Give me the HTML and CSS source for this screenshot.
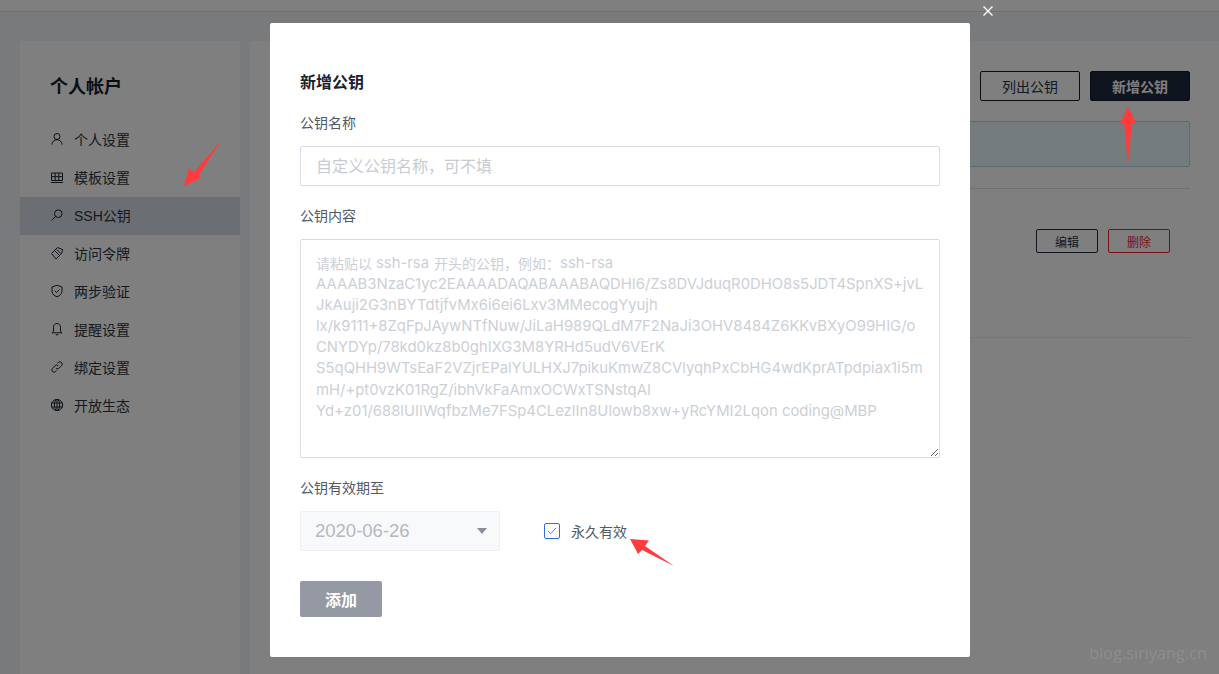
FILE: index.html

```html
<!DOCTYPE html>
<html lang="zh-CN">
<head>
  <meta charset="UTF-8" />
  <meta name="viewport" content="width=device-width, initial-scale=1.0" />
  <title>SSH公钥</title>
  <link rel="stylesheet" href="styles.css">
</head>
<body>
  <div class="topbar"></div>

  <div class="page">
    <aside class="sidebar">
      <h2 class="sidebar-title">个人帐户</h2>
      <nav class="menu">
        <a class="menu-item">
          <svg class="menu-icon" viewBox="0 0 14 14"><circle cx="7" cy="4.5" r="3"/><path d="M1.8 12.6c.4-3 2.500-4.900 5.200-4.900s4.800 1.900 5.200 4.900"/></svg>
          个人设置
        </a>
        <a class="menu-item">
          <svg class="menu-icon" viewBox="0 0 14 14"><path d="M1.500 3h11v7.500h-11zM1.500 6.700h11M5.200 3v7.500M8.800 3v7.500M1 12.500h12"/></svg>
          模板设置
        </a>
        <a class="menu-item active">
          <svg class="menu-icon" viewBox="0 0 14 14"><circle cx="8.300" cy="5.700" r="3.800"/><path d="M5.500 8.500l-4 4"/></svg>
          SSH公钥
        </a>
        <a class="menu-item">
          <svg class="menu-icon" viewBox="0 0 14 14"><path d="M1.500 7.500l6-6 5 2-.5 3.500-6 6zM5 5l4 4M6.700 3.400l4 4"/></svg>
          访问令牌
        </a>
        <a class="menu-item">
          <svg class="menu-icon" viewBox="0 0 14 14"><path d="M7 1.200l5 1.800v4.200c0 2.800-2.200 4.600-5 5.600-2.800-1-5-2.800-5-5.600V3zM4.800 6.800l1.700 1.700 2.900-3"/></svg>
          两步验证
        </a>
        <a class="menu-item">
          <svg class="menu-icon" viewBox="0 0 14 14"><path d="M7 1.500c-2.300 0-3.500 1.700-3.500 3.800v4L2 10.800h10L10.500 9.300v-4C10.500 3.200 9.300 1.500 7 1.500zM5.800 12.800h2.400"/></svg>
          提醒设置
        </a>
        <a class="menu-item">
          <svg class="menu-icon" viewBox="0 0 14 14"><path d="M5.800 8.200a2.200 2.200 0 0 0 3.200 0l2.500-2.500a2.200 2.200 0 0 0-3.200-3.200L7.300 3.500M8.200 5.800a2.200 2.200 0 0 0-3.200 0L2.500 8.300a2.200 2.200 0 0 0 3.200 3.200l1-1"/></svg>
          绑定设置
        </a>
        <a class="menu-item">
          <svg class="menu-icon" viewBox="0 0 14 14"><circle cx="7" cy="7" r="5.600"/><ellipse cx="7" cy="7" rx="2.600" ry="5.600"/><path d="M1.400 5h11.200M1.400 9h11.200M7 1.400v11.200"/></svg>
          开放生态
        </a>
      </nav>
    </aside>

    <main class="content">
      <div class="toolbar">
        <button class="btn">列出公钥</button>
        <button class="btn btn-dark">新增公钥</button>
      </div>
      <div class="notice"></div>
      <div class="key-row">
        <button class="btn-small">编辑</button>
        <button class="btn-small btn-danger">删除</button>
      </div>
    </main>
  </div>

  <div class="overlay">
    <div class="modal">
      <span class="modal-close">
        <svg viewBox="0 0 12 12"><path d="M1.500 1.500l9 9M10.500 1.500l-9 9"/></svg>
      </span>
      <h3 class="modal-title">新增公钥</h3>

      <label class="field-label">公钥名称</label>
      <input class="text-input" type="text" placeholder="自定义公钥名称&#xFF0C;可不填">

      <label class="field-label">公钥内容</label>
      <div class="text-area">
        <div class="hint-head"><span class="cjk">请粘贴以</span><span class="latin">ssh-rsa</span><span class="cjk">开头的公钥&#xFF0C;例如&#xFF1A;</span><span>ssh-rsa</span></div>
        <div class="hint-body">AAAAB3NzaC1yc2EAAAADAQABAAABAQDHI6/Zs8DVJduqR0DHO8s5JDT4SpnXS+jvL
JkAuji2G3nBYTdtjfvMx6i6ei6Lxv3MMecogYyujh
lx/k9111+8ZqFpJAywNTfNuw/JiLaH989QLdM7F2NaJi3OHV8484Z6KKvBXyO99HIG/o
CNYDYp/78kd0kz8b0ghIXG3M8YRHd5udV6VErK
S5qQHH9WTsEaF2VZjrEPalYULHXJ7pikuKmwZ8CVlyqhPxCbHG4wdKprATpdpiax1i5m
mH/+pt0vzK01RgZ/ibhVkFaAmxOCWxTSNstqAI
Yd+z01/688lUIIWqfbzMe7FSp4CLezlIn8Ulowb8xw+yRcYMI2Lqon coding@MBP</div>
      </div>

      <label class="field-label">公钥有效期至</label>
      <div class="expire-row">
        <div class="date-select">2020-06-26<span class="caret"></span></div>
        <label class="check">
          <span class="check-box">
            <svg viewBox="0 0 16 16"><path d="M3.500 8l3 3.200L12.500 4.500"/></svg>
          </span>
          永久有效
        </label>
      </div>

      <button class="btn-submit">添加</button>
    </div>
  </div>

  <!-- arrows drawn on top of the screenshot -->
  <svg class="marks" viewBox="0 0 1219 674">
    <polygon points="184,186 189,168 194,172 221,141 199,175 201,178"/>
    <polygon points="1128,107 1136,123 1132,123 1128,164 1124,123 1120,123"/>
    <polygon points="630,539 649,540.500 645,546 674,566 642,550 638,554"/>
  </svg>
  <div class="watermark">blog.siriyang.cn</div>
</body>
</html>
```

FILE: styles.css

```css
* {
  margin: 0;
  padding: 0;
  box-sizing: border-box;
  font-family: "Liberation Sans", "Noto Sans CJK SC", sans-serif;
}

html, body {
  height: 100%;
  overflow: hidden;
}

body {
  background: #f0f4f8;
  color: #1a2230;
  display: flex;
  flex-direction: column;
}

.topbar {
  height: 12px;
  background: #fff;
  border-bottom: 1px solid #dde0e6;
}

.page {
  flex: 1;
  display: flex;
  gap: 10px;
  padding: 29px 0 0 20px;
}

.sidebar {
  width: 220px;
  background: #fff;
}

.sidebar-title {
  font-size: 18px;
  line-height: 26px;
  font-weight: 700;
  color: #141c28;
  padding: 33px 0 0 30px;
}

.menu {
  margin-top: 21px;
}

.menu-item {
  display: flex;
  align-items: center;
  gap: 10px;
  height: 38px;
  padding: 0 0 2px 30px;
  font-size: 14px;
  color: #2c3440;
}

.menu-item.active {
  background: #d6dfe6;
}

.menu-icon {
  width: 14px;
  height: 14px;
  fill: none;
  stroke: #1a2230;
  stroke-width: 1;
}

.content {
  flex: 1;
  background: #fff;
  padding: 30px 29px 0 30px;
}

.toolbar {
  display: flex;
  justify-content: flex-end;
  gap: 10px;
}

.btn {
  width: 100px;
  height: 30px;
  background: #fff;
  border: 1px solid #141c28;
  border-radius: 2px;
  font-size: 14px;
  color: #2c3440;
}

.btn-dark {
  background: #1f2b3d;
  color: #fff;
  font-weight: 700;
}

.notice {
  height: 46px;
  margin-top: 20px;
  background: #e8f8fa;
  border: 1px solid #b4d8e2;
  border-radius: 2px;
}

.key-row {
  height: 150px;
  margin-top: 21px;
  padding: 40px 20px 0 0;
  display: flex;
  justify-content: flex-end;
  align-items: flex-start;
  gap: 10px;
  border-top: 1px solid #dde0e6;
  border-bottom: 1px solid #eceef2;
}

.btn-small {
  width: 62px;
  height: 24px;
  background: #fff;
  border: 1px solid #1f2b3d;
  border-radius: 2px;
  font-size: 12px;
  color: #2c3440;
}

.btn-danger {
  border-color: #f0202a;
  color: #f0202a;
}

/* modal */
.overlay {
  position: fixed;
  inset: 0;
  background: rgba(0, 0, 0, 0.5);
  padding: 23px 0 0 270px;
}

.modal {
  position: relative;
  width: 700px;
  height: 634px;
  padding: 49px 30px 0;
  background: #fff;
  border-radius: 2px;
}

.modal-close {
  position: absolute;
  top: -18px;
  right: -24px;
  width: 12px;
  height: 12px;
}

.modal-close svg {
  display: block;
  fill: none;
  stroke: #fff;
  stroke-width: 1.4;
}

.modal-title {
  font-size: 16px;
  line-height: 22px;
  font-weight: 700;
  color: #1a2230;
}

.field-label {
  display: block;
  font-size: 14px;
  line-height: 20px;
  color: #525a66;
}

.modal-title + .field-label {
  margin-top: 19px;
}

.text-input {
  display: block;
  width: 640px;
  height: 40px;
  margin: 13px 0 20px;
  padding: 2px 15px 0;
  border: 1px solid #d8dde6;
  border-radius: 2px;
  font-size: 16px;
  outline: none;
}

.text-input::placeholder {
  color: #c8ccd2;
  opacity: 1;
}

.text-area {
  width: 640px;
  height: 219px;
  margin: 13px 0 20px;
  padding: 13px 5px 13px 15px;
  border: 1px solid #d8dde6;
  border-radius: 2px;
  font-family: Inter, "Noto Sans CJK SC", sans-serif;
  font-size: 14.850px;
  line-height: 21.100px;
  color: #ccd0d6;
  overflow: hidden;
  resize: both;
}

.hint-head {
  display: flex;
}

.hint-head span {
  font-family: Inter, sans-serif;
}

.hint-head .cjk {
  font-family: "Noto Sans CJK SC", sans-serif;
  font-size: 14px;
}

.hint-head .latin {
  margin: 0 5px 0 4px;
}

.hint-body {
  font-family: Inter, sans-serif;
  white-space: pre;
}

.expire-row {
  display: flex;
  align-items: center;
  gap: 44px;
  margin-top: 13px;
}

.date-select {
  position: relative;
  width: 200px;
  height: 40px;
  line-height: 38px;
  padding-left: 14px;
  background: #f8f9fb;
  border: 1px solid #eef0f3;
  border-radius: 2px;
  font-size: 18.500px;
  color: #b4b8c2;
}

.caret {
  position: absolute;
  right: 12px;
  top: 16px;
  border-left: 5px solid transparent;
  border-right: 5px solid transparent;
  border-top: 6px solid #8a8f99;
}

.check {
  display: flex;
  align-items: center;
  gap: 11px;
  font-size: 14px;
  color: #525a66;
}

.check-box {
  width: 16px;
  height: 16px;
  border: 1px solid #2f6fed;
  border-radius: 2px;
}

.check-box svg {
  display: block;
  width: 14px;
  height: 14px;
  fill: none;
  stroke: #2f6fed;
  stroke-width: 1;
}

.btn-submit {
  display: block;
  width: 82px;
  height: 36px;
  margin-top: 30px;
  background: #9499a3;
  border: none;
  border-radius: 2px;
  font-size: 16px;
  font-weight: 700;
  color: #fff;
}

.marks {
  position: fixed;
  left: 0;
  top: 0;
  width: 1219px;
  height: 674px;
  fill: #ff3b3b;
  pointer-events: none;
}

.watermark {
  position: fixed;
  right: 12px;
  bottom: 10px;
  font-family: "Open Sans", sans-serif;
  font-size: 16.300px;
  color: #8e8e8e;
}
```
